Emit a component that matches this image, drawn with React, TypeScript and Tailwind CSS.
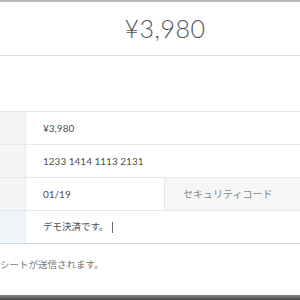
import React from "react";

const font = { fontFamily: '"Lato", "Noto Sans CJK JP", sans-serif' };

function Row({ children }: { children: React.ReactNode }) {
  return (
    <div className="flex h-[33px] border-t border-[#e6e9ec]">
      <div className="w-[26px] shrink-0 bg-[#f3f5f7] border-r border-[#e9ecef]" />
      {children}
    </div>
  );
}

export default function App() {
  return (
    <div className="w-[300px] h-[300px] bg-white overflow-hidden flex flex-col" style={font}>
      <div className="h-[2px] bg-[#b9b9b9]" />
      <div className="h-[54px] flex items-center justify-center pl-[30px] border-b border-[#dcdcdc]">
        <span className="text-[25px] font-light text-[#555] tracking-[0.5px] leading-none">¥3,980</span>
      </div>
      <div className="h-[55px]" />
      <div className="flex flex-col text-[10px] text-[#505050]">
        <Row>
          <div className="flex items-center pl-[17px]">¥3,980</div>
        </Row>
        <Row>
          <div className="flex items-center pl-[17px]">1233 1414 1113 2131</div>
        </Row>
        <Row>
          <div className="flex flex-1">
            <div className="w-[138px] flex items-center pl-[17px]">01/19</div>
            <div className="flex-1 flex items-center pl-[18px] bg-[#f6f6f6] border-l border-[#e6e6e6] text-[#888]">
              セキュリティコード
            </div>
          </div>
        </Row>
        <div className="flex h-[34px] border-t border-[#e6e9ec] border-b border-b-[#c9dde3]">
          <div className="w-[26px] shrink-0 bg-[#eef4f8] border-r border-[#e3ecf1]" />
          <div className="flex items-center pl-[17px] text-[9.5px]">
            デモ決済です。<span className="ml-[3px] w-px h-[11px] bg-[#666]" />
          </div>
        </div>
      </div>
      <div className="h-[36px] pt-[6px] flex items-center text-[9.5px] text-[#777]">
        シートが送信されます。
      </div>
      <div className="flex-1" />
      <div className="h-[5px] bg-gradient-to-b from-[#888] to-[#444]" />
    </div>
  );
}
